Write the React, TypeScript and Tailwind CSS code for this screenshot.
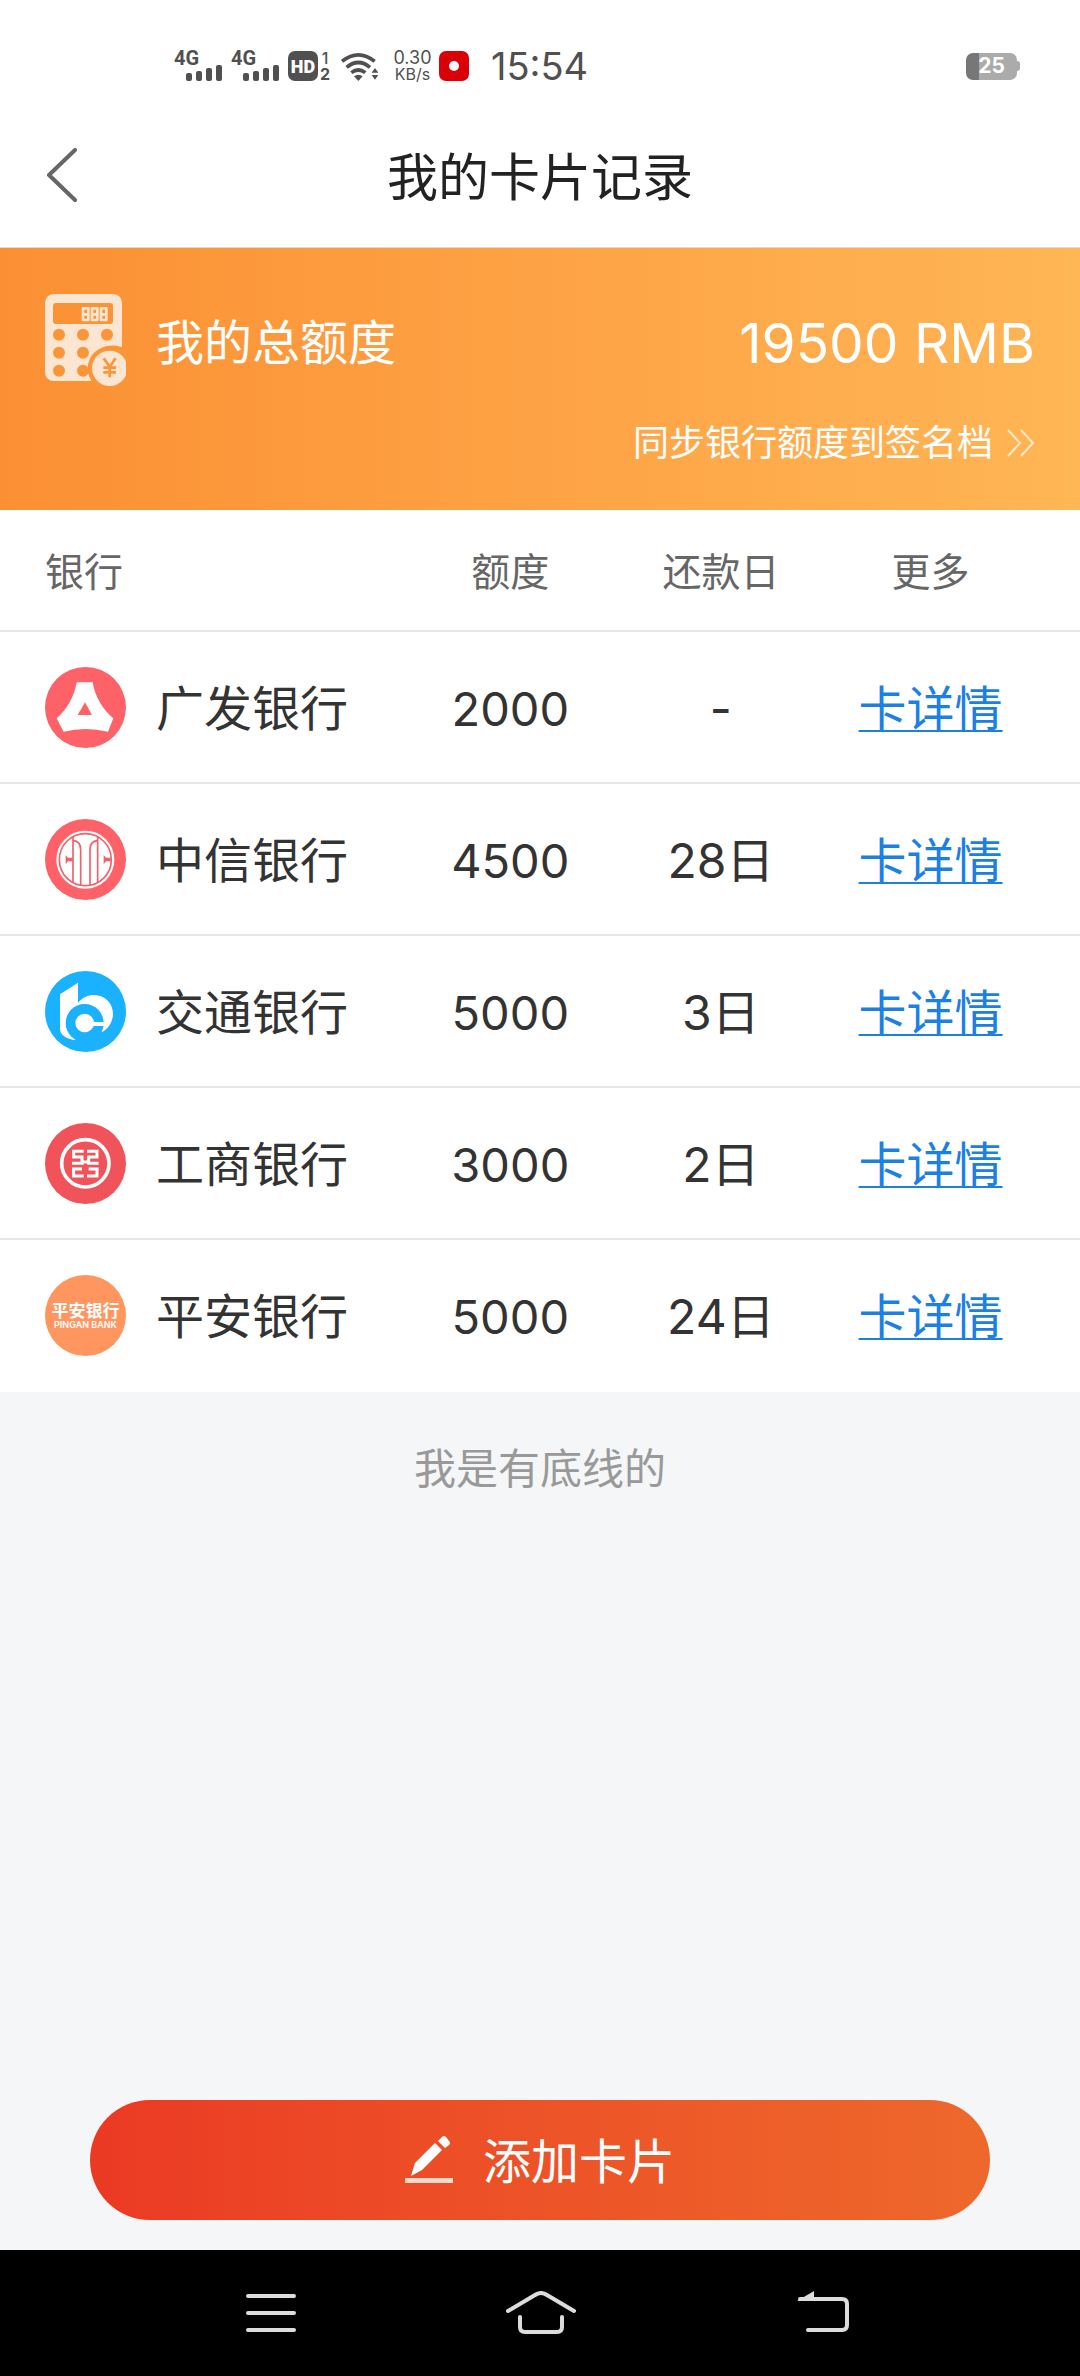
import type { ReactNode } from "react";

const disc = "block size-[81px] shrink-0";

function GuangfaLogo() {
  return (
    <svg className={disc} viewBox="0 0 243 243" aria-hidden="true">
      <circle cx="121.500" cy="121.500" r="121.500" fill="#fe6269" />
      <path
        d="M95 46H143C150 90 175 130 205 154L189 194Q121 178 56 194L35 154C64 130 88 90 95 46Z"
        fill="#fff"
      />
      <path d="M120 106L141 144H98Z" fill="#fe6269" />
    </svg>
  );
}

function CiticLogo() {
  return (
    <svg className={disc} viewBox="0 0 243 243" aria-hidden="true">
      <circle cx="121.500" cy="121.500" r="121.500" fill="#fe6269" />
      <circle cx="121" cy="122" r="87" fill="#fff" />
      <g fill="none" stroke="#ee626a" strokeWidth="5">
        <circle cx="121" cy="122" r="78" />
        <path d="M84 54V190M84 64C98 66 107 76 107 92V198M135 198V92C135 76 144 66 158 64M158 54V190" />
      </g>
      <path d="M62 108L69 116H84V127H69L62 136ZM176 108L183 116H197V127H183L176 136Z" fill="#ee626a" />
    </svg>
  );
}

function JiaotongLogo() {
  return (
    <svg className={disc} viewBox="0 0 243 243" aria-hidden="true">
      <circle cx="121.500" cy="121.500" r="121.500" fill="#1ab1ff" />
      <path
        d="M45 70L99 35V96C112 80 128 72 147 72C180 72 204 98 204 128C204 152 190 174 170 184L175 165L119 156L90 208C66 202 45 196 45 172Z"
        fill="#fff"
      />
      <circle cx="119" cy="156" r="57" fill="#1ab1ff" />
      <circle cx="119" cy="156" r="28" fill="#fff" />
      <path d="M140 153H178V165H140Z" fill="#fff" />
    </svg>
  );
}

function GongshangLogo() {
  return (
    <svg className={disc} viewBox="0 0 243 243" aria-hidden="true">
      <circle cx="121.500" cy="121.500" r="121.500" fill="#f05359" />
      <circle cx="121" cy="121" r="71" fill="none" stroke="#fff" strokeWidth="11" />
      <g fill="none" stroke="#fff" strokeWidth="9">
        <path d="M116 85H86V102H111V121H81" />
        <path d="M126 85H156V102H131V121H161" />
        <path d="M81 138H111V138H86V159H116" />
        <path d="M161 138H131V138H156V159H126" />
        <path d="M111 117H131" />
      </g>
    </svg>
  );
}

function PinganLogo() {
  return (
    <div className="flex size-[81px] shrink-0 flex-col items-center justify-center rounded-full bg-[#ff965f] text-white">
      <span className="text-[17px] leading-[18px] font-bold">平安银行</span>
      <span className="font-['Inter'] text-[9px] leading-[9px] font-semibold whitespace-nowrap">PINGAN BANK</span>
    </div>
  );
}

type Bank = { name: string; limit: string; due: string; logo: ReactNode };

const banks: Bank[] = [
  { name: "广发银行", limit: "2000", due: "-", logo: <GuangfaLogo /> },
  { name: "中信银行", limit: "4500", due: "28日", logo: <CiticLogo /> },
  { name: "交通银行", limit: "5000", due: "3日", logo: <JiaotongLogo /> },
  { name: "工商银行", limit: "3000", due: "2日", logo: <GongshangLogo /> },
  { name: "平安银行", limit: "5000", due: "24日", logo: <PinganLogo /> },
];

function Signal() {
  return (
    <div className="relative h-8 w-12">
      <span className="absolute top-0 left-0 font-['Roboto'] text-[20px] leading-4 font-bold">4G</span>
      <svg className="absolute right-0 bottom-0 h-[18px] w-9" viewBox="0 0 36 18" fill="currentColor" aria-hidden="true">
        <rect x="0" y="9" width="6" height="8" rx="2" />
        <rect x="10" y="7" width="6" height="10" rx="2" />
        <rect x="20" y="4" width="6" height="13" rx="2" />
        <rect x="30" y="1" width="6" height="16" rx="2" />
      </svg>
    </div>
  );
}

function StatusBar() {
  return (
    <div className="flex h-[104px] items-center bg-white pt-7 pr-[60px] pl-[174px] text-[#505050]">
      <div className="flex items-center gap-[9px]">
        <Signal />
        <Signal />
        <div className="flex items-center gap-[2px]">
          <span className="flex size-[30px] items-center justify-center rounded-[7px] bg-[#505050] font-['Roboto'] text-[18px] font-black text-white">
            HD
          </span>
          <span className="flex w-[10px] flex-col items-center font-['Inter'] text-[16px] leading-4 font-bold">
            <span className="font-medium">1</span>
            <span>2</span>
          </span>
        </div>
      </div>
      <svg className="ml-[11px] h-[30px] w-[39px]" viewBox="0 0 117 90" fill="none" stroke="currentColor" strokeWidth="11" aria-label="Wi-Fi">
        <path d="M3 31Q52 -8 101 31" />
        <path d="M17 49Q52 20 87 49" />
        <path d="M31 65Q52 49 73 65" />
        <path d="M39 76Q52 66 65 76L52 90Z" fill="currentColor" stroke="none" />
        <path d="M92 65L102 51L112 65ZM92 72L102 86L112 72Z" fill="currentColor" stroke="none" />
      </svg>
      <div className="ml-[14px] flex w-[37px] flex-col items-center font-['Inter'] text-[18px] leading-[17px]">
        <span>0.30</span>
        <span className="text-[16px]">KB/s</span>
      </div>
      <span className="ml-2 flex size-[30px] items-center justify-center rounded-[7px] bg-[#d90007]">
        <span className="size-[10px] rounded-full bg-white" />
      </span>
      <span className="ml-[22px] font-['Inter'] text-[38px] leading-[38px]">15:54</span>
      <div className="ml-auto flex items-center">
        <div className="flex h-[27px] w-[51px] items-center justify-center rounded-[7px] bg-linear-to-r from-[#777] from-25% to-[#ababab] to-25% font-['Inter'] text-[21px] font-bold text-white">
          25
        </div>
        <span className="h-[10px] w-[3px] rounded-r bg-[#ababab]" />
      </div>
    </div>
  );
}

function CalculatorIcon() {
  return (
    <svg className="h-[92px] w-[81px]" viewBox="0 0 243 276" aria-hidden="true">
      <path
        fillRule="evenodd"
        fill="#fde6d1"
        d="M26 0H205A26 26 0 0 1 231 26V160A72 72 0 0 0 140 261H26A26 26 0 0 1 0 235V26A26 26 0 0 1 26 0ZM34 27A10 10 0 0 0 24 37V80A10 10 0 0 0 34 90H194A10 10 0 0 0 204 80V37A10 10 0 0 0 194 27Z"
      />
      <g fill="#fb953a">
        <circle cx="42" cy="122" r="18" />
        <circle cx="114" cy="122" r="18" />
        <circle cx="186" cy="122" r="18" />
        <circle cx="42" cy="176" r="18" />
        <circle cx="114" cy="176" r="18" />
        <circle cx="42" cy="230" r="18" />
        <circle cx="114" cy="230" r="18" />
        <circle cx="194" cy="223" r="66" />
      </g>
      <g fill="none" stroke="#fde6d1" strokeWidth="8" strokeLinejoin="round">
        <path d="M114 43H130V78H114ZM114 61H130M141 43H157V78H141ZM141 61H157M168 43H184V78H168ZM168 61H184" />
      </g>
      <circle cx="194" cy="223" r="53" fill="#fde6d1" />
      <path d="M176 193L194 218L212 193M194 218V250M175 221H213M175 235H213" fill="none" stroke="#fb953a" strokeWidth="8" />
    </svg>
  );
}

export default function App() {
  return (
    <div className="flex min-h-screen flex-col bg-[#f4f6f8] font-['Inter','Noto_Sans_CJK_SC',sans-serif] text-[#333]">
      <StatusBar />
      <header className="grid h-36 grid-cols-[1fr_auto_1fr] items-center border-b border-[#e5d8cc] bg-white px-[45px]">
        <button type="button" aria-label="返回" className="justify-self-start">
          <svg className="h-14 w-[34px]" viewBox="0 0 34 56" fill="none" stroke="#666" strokeWidth="4" strokeLinecap="round" strokeLinejoin="round">
            <path d="M30 2L4 27L30 52" />
          </svg>
        </button>
        <h1 className="pt-1 text-[51px] leading-[60px] text-[#222]">我的卡片记录</h1>
      </header>

      <section className="bg-linear-to-r from-[#fb8f33] to-[#ffb655] px-[45px] pt-[46px] pb-[42px] text-white">
        <div className="flex items-center">
          <CalculatorIcon />
          <h2 className="ml-[30px] pt-1.5 text-[48px] leading-[60px]">我的总额度</h2>
          <span className="ml-auto pt-1.5 text-[55px] leading-[60px]">19500 RMB</span>
        </div>
        <a href="#sync" className="mt-8 flex items-center justify-end text-[36px] leading-[50px]">
          同步银行额度到签名档
          <svg className="ml-3.5 h-7 w-7" viewBox="0 0 28 28" fill="none" stroke="#ffe9c9" strokeWidth="2">
            <path d="M1 1L13 14L1 27M14 1L26 14L14 27" />
          </svg>
        </a>
      </section>

      <table className="w-full table-fixed border-separate border-spacing-0 bg-white">
        <colgroup>
          <col className="w-[37.5%]" />
          <col className="w-[19.5%]" />
          <col className="w-[19.5%]" />
          <col />
        </colgroup>
        <thead>
          <tr className="h-[122px] text-[39px] leading-[60px] text-[#666] *:border-b-2 *:border-[#e5e5e5] *:pt-1 *:font-normal">
            <th scope="col" className="pl-[45px] text-left">银行</th>
            <th scope="col">额度</th>
            <th scope="col">还款日</th>
            <th scope="col" className="pr-[45px]">更多</th>
          </tr>
        </thead>
        <tbody>
          {banks.map((bank) => (
            <tr
              key={bank.name}
              className="h-[152px] text-center text-[48px] leading-[60px] *:border-b-2 *:border-[#e5e5e5] last:*:border-white"
            >
              <td className="pl-[45px]">
                <div className="flex items-center gap-[30px]">
                  {bank.logo}
                  <span className="pt-1">{bank.name}</span>
                </div>
              </td>
              <td className="pt-1 text-[47px]">{bank.limit}</td>
              <td className="pt-1">{bank.due}</td>
              <td className="pt-1 pr-[45px]">
                <a href="#detail" className="text-[#1c80e3] underline decoration-2 underline-offset-4">卡详情</a>
              </td>
            </tr>
          ))}
        </tbody>
      </table>

      <main className="flex flex-1 flex-col">
        <p className="pt-[51px] text-center text-[42px] leading-[52px] text-[#999]">我是有底线的</p>
        <button
          type="button"
          className="mx-[90px] mt-auto mb-[30px] flex h-[120px] items-center justify-center gap-[30px] rounded-full bg-linear-to-r from-[#eb3924] to-[#ee682b] text-[48px] leading-[60px] text-white"
        >
          <svg className="size-12" viewBox="0 0 48 48" fill="#fff" aria-hidden="true">
            <path d="M6 40L10 27L30 7L37 14L17 34Z" />
            <path d="M33 5L37 1Q39 -1 41 1L44 5Q46 7 44 9L40 12Z" />
            <rect y="42" width="48" height="5" fill="#ffd5c8" />
          </svg>
          <span className="pt-1">添加卡片</span>
        </button>
      </main>

      <nav className="flex h-[126px] items-center justify-between bg-black pr-[231px] pl-[246px] text-[#dcdcdc]">
        <button type="button" aria-label="菜单">
          <svg className="block h-11 w-[50px]" viewBox="0 0 50 44" stroke="currentColor" strokeWidth="4" strokeLinecap="round">
            <path d="M2 5H48M2 22H48M2 39H48" />
          </svg>
        </button>
        <button type="button" aria-label="主页">
          <svg className="block h-11 w-[70px]" viewBox="0 0 70 44" fill="none" stroke="currentColor" strokeWidth="4" strokeLinecap="round">
            <path d="M2 20L29 4Q35 0 41 4L68 20M14 26V36Q14 41 19 41H51Q56 41 56 36V26" />
          </svg>
        </button>
        <button type="button" aria-label="后退">
          <svg className="block h-11 w-[63px]" viewBox="0 0 63 44" fill="none" stroke="currentColor" strokeWidth="4" strokeLinecap="round">
            <path d="M14 8H56Q61 8 61 13V34Q61 39 56 39H22" />
            <path d="M11 10L28 0V10Z" fill="currentColor" stroke="none" />
          </svg>
        </button>
      </nav>
    </div>
  );
}
